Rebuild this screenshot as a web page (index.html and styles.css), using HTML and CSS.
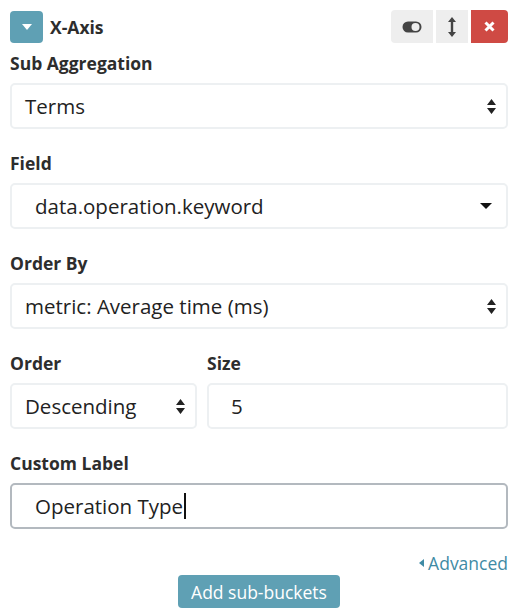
FILE: index.html
```html
<!DOCTYPE html>
<html>
<head>
<meta charset="utf-8">
<link rel="stylesheet" href="styles.css">
</head>
<body>
<div class="panel">
  <div class="header">
    <div class="title">
      <span class="toggle-btn">
        <svg width="10" height="6" viewBox="0 0 10 6"><path d="M0 0h10L5 6z" fill="#fff"/></svg>
      </span>
      <span class="title-text">X-Axis</span>
    </div>
    <div class="actions">
      <span class="act act-gray act-wide">
        <svg width="20" height="12" viewBox="0 0 20 12"><rect x="0.5" y="0.5" width="19" height="11" rx="5.5" fill="#444"/><circle cx="13.5" cy="6" r="4" fill="#eee"/></svg>
      </span>
      <span class="act act-gray">
        <svg width="8" height="20" viewBox="0 0 8 20"><path d="M4 0L8 5H5.2V15H8L4 20L0 15H2.8V5H0z" fill="#444"/></svg>
      </span>
      <span class="act act-red">
        <svg width="11" height="11" viewBox="0 0 11 11"><path d="M1.5 1.5L9.5 9.5M9.5 1.5L1.5 9.5" stroke="#fff" stroke-width="3" stroke-linecap="butt"/></svg>
      </span>
    </div>
  </div>

  <div class="group">
    <div class="label">Sub Aggregation</div>
    <div class="control">
      <span class="value">Terms</span>
      <span class="updown"><svg width="9" height="15" viewBox="0 0 9 15"><path d="M4.5 0L9 6H0z M0 9H9L4.5 15z" fill="#222"/></svg></span>
    </div>
  </div>

  <div class="group">
    <div class="label">Field</div>
    <div class="control control-wide">
      <span class="value">data.operation.keyword</span>
      <span class="caret"><svg width="12" height="6" viewBox="0 0 12 6"><path d="M0 0H12L6 6z" fill="#111"/></svg></span>
    </div>
  </div>

  <div class="group">
    <div class="label">Order By</div>
    <div class="control">
      <span class="value">metric: Average time (ms)</span>
      <span class="updown"><svg width="9" height="15" viewBox="0 0 9 15"><path d="M4.5 0L9 6H0z M0 9H9L4.5 15z" fill="#222"/></svg></span>
    </div>
  </div>

  <div class="row">
    <div class="group col-order">
      <div class="label">Order</div>
      <div class="control">
        <span class="value">Descending</span>
        <span class="updown"><svg width="9" height="15" viewBox="0 0 9 15"><path d="M4.5 0L9 6H0z M0 9H9L4.5 15z" fill="#222"/></svg></span>
      </div>
    </div>
    <div class="group col-size">
      <div class="label">Size</div>
      <div class="control control-input">
        <span class="value">5</span>
      </div>
    </div>
  </div>

  <div class="group">
    <div class="label">Custom Label</div>
    <div class="control control-wide control-focus">
      <span class="value">Operation Type<span class="cursor"></span></span>
    </div>
  </div>

  <div class="advanced">
    <span class="adv-link"><svg width="5" height="8" viewBox="0 0 5 8"><path d="M5 0V8L0 4z" fill="#3f8ba5"/></svg>Advanced</span>
  </div>

  <div class="footer">
    <span class="add-btn">Add sub-buckets</span>
  </div>
</div>
</body>
</html>
```

FILE: styles.css
```css
* { box-sizing: border-box; }
html, body { margin: 0; padding: 0; background: #fff; }
body {
  font-family: "Open Sans", "Liberation Sans", sans-serif;
  color: #2d2d2d;
  width: 522px;
  height: 615px;
  overflow: hidden;
}
.panel {
  padding: 10px 14px 0 10px;
}
.header {
  display: flex;
  justify-content: space-between;
  align-items: center;
  height: 33px;
}
.title {
  display: flex;
  align-items: center;
}
.toggle-btn {
  width: 33px;
  height: 32px;
  background: #5fa0b4;
  border-radius: 4px;
  display: flex;
  align-items: center;
  justify-content: center;
}
.title-text {
  font-weight: 700;
  font-size: 17.5px;
  margin-left: 7px;
  color: #2d2d2d;
  line-height: 24px;
}
.actions {
  display: flex;
  gap: 3px;
}
.act {
  height: 33px;
  width: 32px;
  display: flex;
  align-items: center;
  justify-content: center;
}
.act-wide { width: 42px; border-radius: 4px 0 0 4px; }
.act-gray { background: #eeeeee; }
.act-red { background: #cf4a44; width: 37px; border-radius: 0 4px 4px 0; }

.group { margin-top: 22px; }
.header + .group { margin-top: 8px; }
.label {
  font-weight: 700;
  font-size: 17.5px;
  line-height: 24px;
  color: #2d2d2d;
  margin-bottom: 8px;
}
.control {
  height: 46px;
  border: 2px solid #edf0f2;
  border-radius: 5px;
  display: flex;
  align-items: center;
  justify-content: space-between;
  padding: 0 10px 0 13px;
  font-size: 20.5px;
  color: #222;
}
.control-wide { padding-left: 23px; padding-right: 14px; }
.control-focus { border-color: #b3b9bf; }
.value { line-height: 26px; display: inline-flex; align-items: center; }
.updown { display: flex; align-items: center; }
.caret { display: flex; align-items: center; }
.cursor {
  display: inline-block;
  width: 1.5px;
  height: 26px;
  background: #111;
  margin-left: 1px;
}
.row {
  display: flex;
  gap: 10px;
  margin-top: 22px;
}
.row .group { margin-top: 0; }
.col-order { width: 187px; }
.col-size { flex: 1; }
.control-input { padding-left: 22px; }

.advanced {
  display: flex;
  justify-content: flex-end;
  margin-top: 22px;
}
.adv-link {
  color: #3f8ba5;
  font-size: 17.5px;
  line-height: 24px;
  display: inline-flex;
  align-items: center;
  gap: 4px;
}
.footer {
  display: flex;
  justify-content: center;
  margin-top: 0;
}
.add-btn {
  background: #5fa0b4;
  color: #fff;
  font-size: 17.5px;
  height: 33px;
  padding: 0 13px;
  border-radius: 4px;
  display: inline-flex;
  align-items: center;
}
```
